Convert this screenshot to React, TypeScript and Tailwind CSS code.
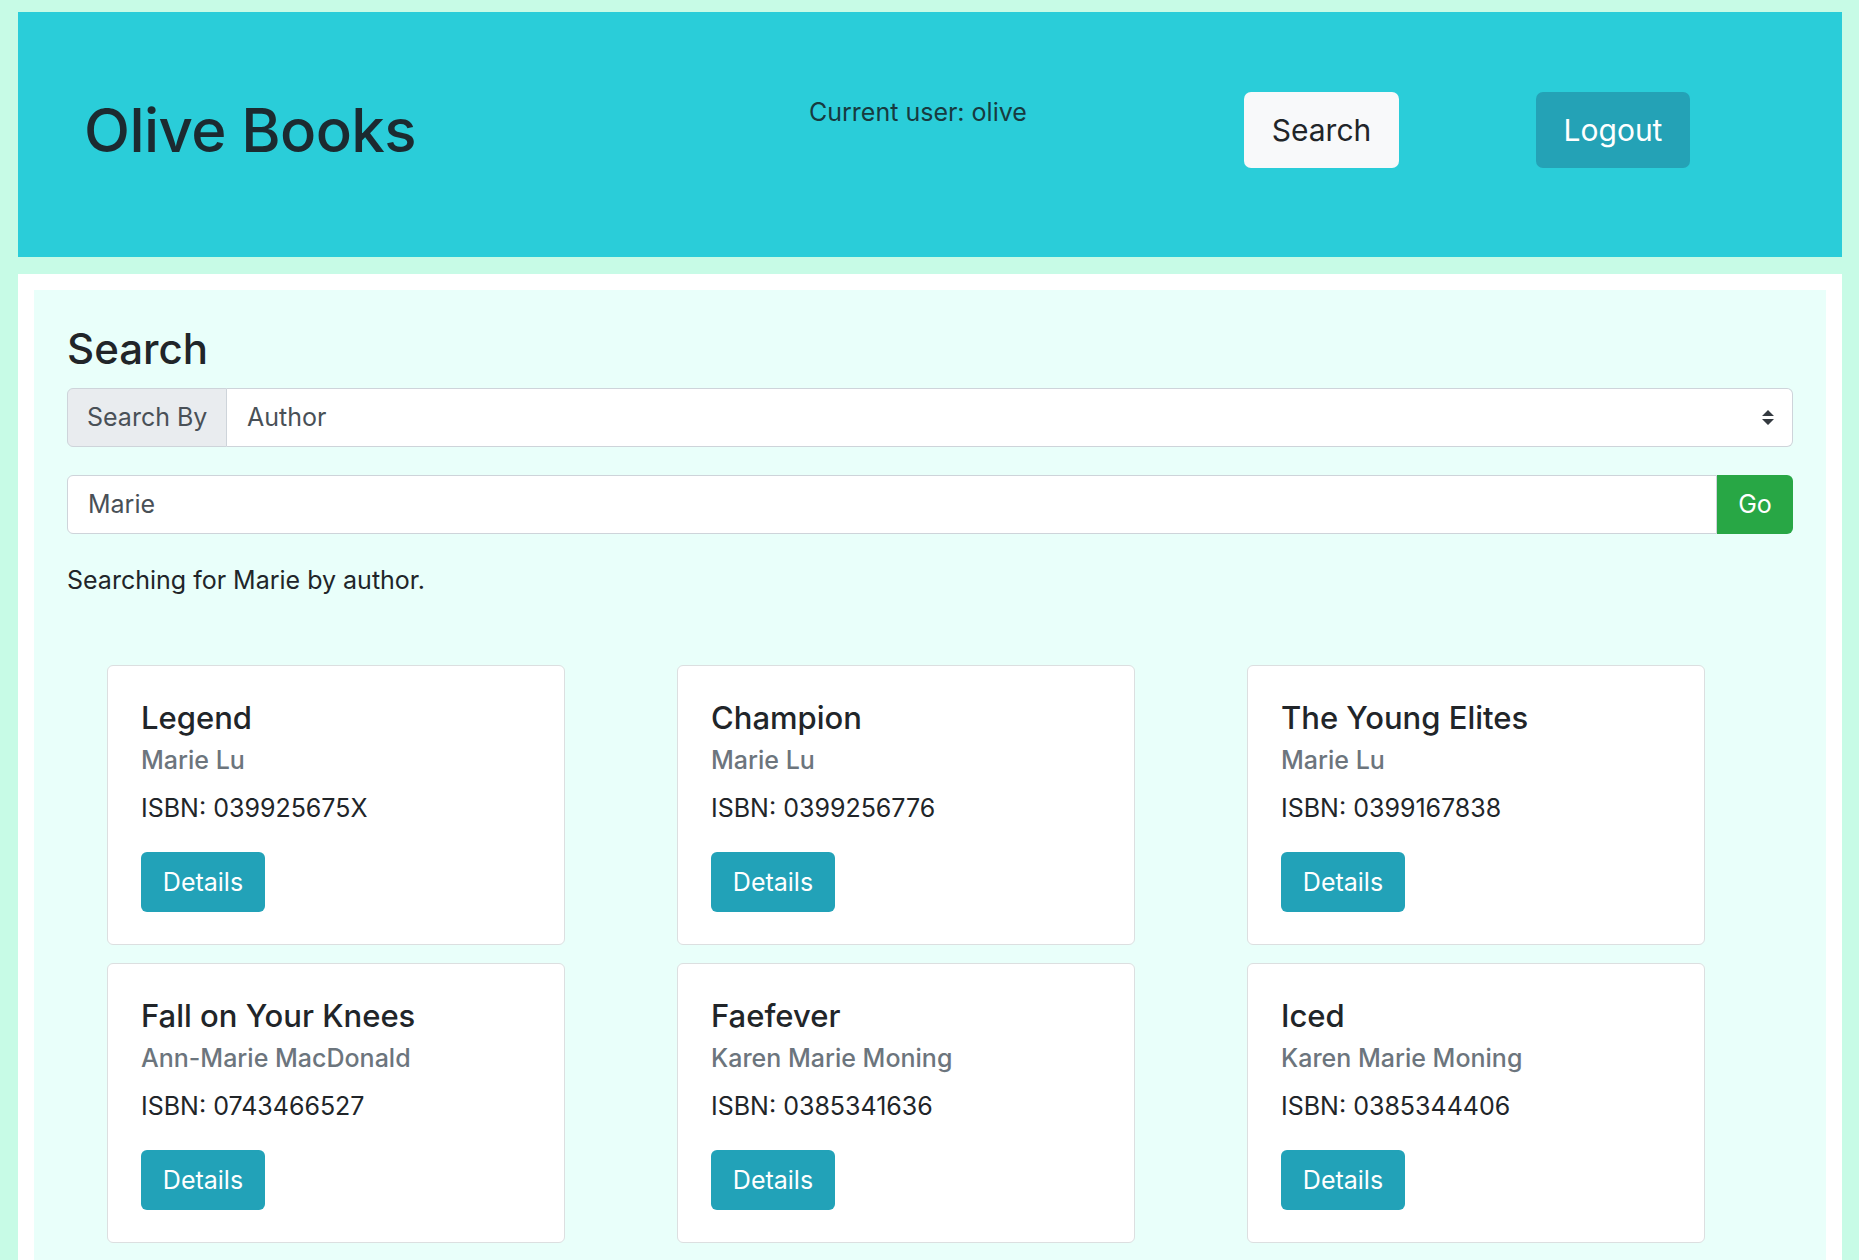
import React from "react";

type Book = { title: string; author: string; isbn: string };

const books: Book[] = [
  { title: "Legend", author: "Marie Lu", isbn: "039925675X" },
  { title: "Champion", author: "Marie Lu", isbn: "0399256776" },
  { title: "The Young Elites", author: "Marie Lu", isbn: "0399167838" },
  { title: "Fall on Your Knees", author: "Ann-Marie MacDonald", isbn: "0743466527" },
  { title: "Faefever", author: "Karen Marie Moning", isbn: "0385341636" },
  { title: "Iced", author: "Karen Marie Moning", isbn: "0385344406" },
];

function BookCard({ book }: { book: Book }) {
  return (
    <div className="h-[280px] bg-white border border-[#dcdfe0] rounded-[6px] px-[33px] pt-[33px] pb-[32px] flex flex-col items-start">
      <div className="text-[31px] font-medium leading-[37px] text-[#212529] whitespace-nowrap">{book.title}</div>
      <div className="mt-[10px] text-[25px] font-medium leading-[29px] text-[#6c757d] whitespace-nowrap">{book.author}</div>
      <div className="mt-[15px] text-[25px] leading-[36px] text-[#212529] whitespace-nowrap">ISBN: {book.isbn}</div>
      <button className="mt-[26px] h-[60px] w-[124px] rounded-[6px] bg-[#22a2b8] text-white text-[25px] leading-[36px]">
        Details
      </button>
    </div>
  );
}

export default function App() {
  return (
    <div
      className="min-h-screen bg-[#c7fbe6] pt-[12px] pl-[18px] pr-[17px] text-[#212529]"
      style={{ fontFamily: "Inter, 'Noto Sans', sans-serif" }}
    >
      <header className="h-[245px] bg-[#2acdd9] flex items-start pl-[66px] pt-[76px]">
        <h1 className="w-[725px] mt-[6px] text-[60px] font-medium leading-[72px] text-[#1c2a30] tracking-[-0.6px]">Olive Books</h1>
        <div className="flex items-start mt-[4px]">
          <div className="w-[435px] mt-[2px] text-[25px] leading-[36px] text-[#173a40]">Current user: olive</div>
          <button className="h-[76px] w-[155px] rounded-[7px] bg-[#f8f9fa] text-[30px] leading-[45px] text-[#212529]">
            Search
          </button>
          <button className="ml-[137px] h-[76px] w-[154px] rounded-[7px] bg-[#24a2b6] text-[30px] leading-[45px] text-white">
            Logout
          </button>
        </div>
      </header>

      <div className="mt-[17px] bg-white px-[16px] pt-[16px]">
        <div className="bg-[#e9fffa] px-[33px] pt-[34px] pb-[40px]">
          <h3 className="text-[42px] font-medium leading-[50px]">Search</h3>

          <div className="mt-[14px] flex h-[59px] text-[25px]">
            <div className="w-[160px] shrink-0 flex items-center pl-[19px] bg-[#e9ecef] border border-[#ced4da] rounded-l-[6px] text-[#495057] whitespace-nowrap">
              Search By
            </div>
            <div className="flex-1 flex items-center justify-between bg-white border border-l-0 border-[#ced4da] rounded-r-[6px] pl-[20px] pr-[18px] text-[#495057]">
              <span>Author</span>
              <svg width="12" height="15" viewBox="0 0 4 5" className="block">
                <path d="M2 0L0 2h4zm0 5L0 3h4z" fill="#343a40" />
              </svg>
            </div>
          </div>

          <div className="mt-[28px] flex h-[59px] text-[25px]">
            <div className="flex-1 flex items-center bg-white border border-[#ced4da] rounded-l-[6px] pl-[20px] text-[#495057]">
              Marie
            </div>
            <button className="w-[76px] bg-[#28a745] text-white rounded-r-[6px]">Go</button>
          </div>

          <p className="mt-[28px] text-[25px] leading-[36px]">Searching for Marie by author.</p>

          <div className="mt-[67px] ml-[40px] grid grid-cols-[458px_458px_458px] gap-x-[112px] gap-y-[18px]">
            {books.map((b) => (
              <BookCard key={b.title} book={b} />
            ))}
            <div className="h-[280px] bg-white border border-[#dcdfe0] rounded-[6px]" />
            <div className="h-[280px] bg-white border border-[#dcdfe0] rounded-[6px]" />
            <div className="h-[280px] bg-white border border-[#dcdfe0] rounded-[6px]" />
          </div>
        </div>
      </div>
    </div>
  );
}
